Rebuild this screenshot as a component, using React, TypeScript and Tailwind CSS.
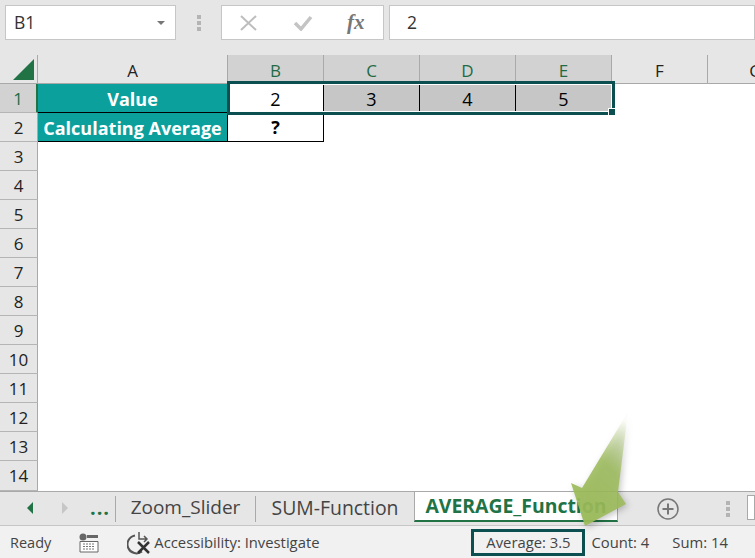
const rows = [3, 4, 5, 6, 7, 8, 9, 10, 11, 12, 13, 14]
const font = "font-['Open_Sans','Noto_Sans',sans-serif]"

function Grip() {
  return (
    <div className="flex flex-col gap-[2px]">
      <span className="h-[4px] w-[4px] bg-[#b4b4b4]" />
      <span className="h-[4px] w-[4px] bg-[#b4b4b4]" />
      <span className="h-[4px] w-[4px] bg-[#b4b4b4]" />
    </div>
  )
}

function FormulaBar() {
  return (
    <div className="flex h-[55px] shrink-0 items-start gap-[5px] bg-[#e6e6e6] pl-[5px] pt-[5px]">
      <div className="flex h-[35px] w-[171px] items-center justify-between border border-[#c6c6c6] bg-white pl-2 pr-[10px] text-[17.5px] text-[#333]">
        B1
        <span className="h-0 w-0 border-x-[4px] border-t-[4px] border-x-transparent border-t-[#777]" />
      </div>
      <div className="flex h-[35px] w-[35px] items-center justify-center">
        <Grip />
      </div>
      <div className="flex h-[35px] w-[163px] items-center border border-[#c6c6c6] bg-white pl-[18px]">
        <svg width="18" height="16" viewBox="0 0 18 16">
          <path d="M1 1 L16 15 M16 1 L1 15" stroke="#bdbdbd" strokeWidth="2" />
        </svg>
        <svg className="ml-[35px]" width="20" height="16" viewBox="0 0 20 16">
          <path d="M2 8 L8 14 L18 2" stroke="#c4c4c4" strokeWidth="3.5" fill="none" />
        </svg>
        <span className="ml-[34px] font-['Liberation_Serif',serif] text-[21px] font-bold italic leading-none text-[#777]">fx</span>
      </div>
      <div className="flex h-[35px] flex-1 items-center border border-[#c6c6c6] bg-white pl-[17px] text-[17.5px] text-[#333]">2</div>
    </div>
  )
}

function ColHead({ label, active }: { label: string; active?: boolean }) {
  return (
    <div
      className={`flex items-center justify-center border-r border-b border-[#a9a9a9] pt-1 text-[17px] ${
        active ? "bg-[#d2d2d2] text-[#1f6b45]" : "bg-[#e6e6e6] text-[#222]"
      }`}
    >
      {label}
    </div>
  )
}

function RowHead({ label, active }: { label: number; active?: boolean }) {
  return (
    <div
      className={`col-start-1 flex items-center justify-center border-b border-[#b5b5b5] pt-px text-[17px] ${
        active ? "border-r-[2px] border-r-[#217346] bg-[#d2d2d2] text-[#1f6b45]" : "border-r border-r-[#a9a9a9] bg-[#e6e6e6] text-[#222]"
      }`}
    >
      {label}
    </div>
  )
}

function Sheet() {
  return (
    <div className="relative h-[436px] shrink-0 overflow-hidden bg-white">
      <div className="grid grid-cols-[38px_190px_96px_96px_96px_96px_96px_96px] grid-rows-[repeat(14,29px)_30px]">
        <div className="relative border-r border-b border-[#a9a9a9] bg-[#e6e6e6]">
          <svg className="absolute left-[13px] top-[4px]" width="22" height="22" viewBox="0 0 22 22">
            <path d="M0 21 L21 21 L21 0 Z" fill="#217346" />
          </svg>
        </div>
        <ColHead label="A" />
        <ColHead label="B" active />
        <ColHead label="C" active />
        <ColHead label="D" active />
        <ColHead label="E" active />
        <ColHead label="F" />
        <ColHead label="G" />

        <RowHead label={1} active />
        <div className="flex items-center justify-center border-r border-b border-black bg-[#0ca09d] pt-[2px] text-[18px] font-bold text-white">Value</div>
        <div className="flex items-center justify-center border-r border-b border-black bg-white pt-[2px] text-[18px] text-black">2</div>
        <div className="flex items-center justify-center border-r border-b border-black bg-[#c6c6c6] pt-[2px] text-[18px] text-black">3</div>
        <div className="flex items-center justify-center border-r border-b border-black bg-[#c6c6c6] pt-[2px] text-[18px] text-black">4</div>
        <div className="flex items-center justify-center border-r border-b border-black bg-[#c6c6c6] pt-[2px] text-[18px] text-black">5</div>

        <RowHead label={2} />
        <div className="flex items-center justify-center whitespace-nowrap border-r border-b border-black bg-[#0ca09d] pt-[2px] text-[18px] font-bold text-white">Calculating Average</div>
        <div className="flex items-center justify-center border-r border-b border-black bg-white text-[18px] font-bold text-black">?</div>

        {rows.map((r) => (
          <RowHead key={r} label={r} />
        ))}
      </div>
      {/* selection outline */}
      <div className="absolute left-[227px] top-[26px] h-[34px] w-[388px] border-[3px] border-[#0b4f51]">
        <div className="h-full w-full border border-white" />
      </div>
      <div className="absolute left-[608px] top-[53px] h-[7px] w-[7px] border-t border-l border-white bg-[#0b4f51]" />
    </div>
  )
}

function Tabs() {
  return (
    <div className="flex h-[34px] shrink-0 items-start border-t border-[#a9a9a9] bg-[#e6e6e6]">
      <span className="ml-[27px] mt-[10px] h-0 w-0 border-y-[6px] border-r-[6px] border-y-transparent border-r-[#217346]" />
      <span className="ml-[29px] mt-[10px] h-0 w-0 border-y-[6px] border-l-[6px] border-y-transparent border-l-[#c6c6c6]" />
      <span className="ml-[19px] mt-[5px] flex h-[22px] w-[26px] items-end justify-center pb-[1px] text-[20px] font-bold leading-none tracking-[1px] text-[#217346]">...</span>
      <div className="ml-[2px] mt-[4px] h-[26px] w-px bg-[#a9a9a9]" />
      <div className="mt-[1px] w-[139px] text-center text-[19px] text-[#444]">Zoom_Slider</div>
      <div className="mt-[4px] h-[26px] w-px bg-[#a9a9a9]" />
      <div className="mt-[1px] w-[158px] text-center text-[19.4px] text-[#444]">SUM-Function</div>
      <div className="flex h-[30px] w-[204px] items-center justify-center border-x border-b-[2px] border-x-[#a9a9a9] border-b-[#217346] bg-white pb-px text-[19.4px] font-bold text-[#217346]">
        AVERAGE_Function
      </div>
      <svg className="ml-[38px] mt-[5px]" width="24" height="24" viewBox="0 0 24 24">
        <circle cx="12" cy="12" r="10" fill="none" stroke="#777" strokeWidth="1.5" />
        <path d="M12 6.5 V17.5 M6.5 12 H17.5" stroke="#777" strokeWidth="2" />
      </svg>
      <div className="ml-[46px] mt-[9px]">
        <Grip />
      </div>
      <div className="ml-[17px] mt-[3px] h-[25px] flex-1 border border-[#a9a9a9] bg-white" />
    </div>
  )
}

function StatusBar() {
  return (
    <div className="flex h-[33px] shrink-0 items-center border-t border-[#c6c6c6] bg-[#f1f1f1] pt-px text-[14.8px] text-[#444]">
      <span className="ml-[10px] text-[14.5px]">Ready</span>
      <svg className="ml-[27px]" width="21" height="20" viewBox="0 0 21 20">
        <circle cx="5" cy="4" r="3.5" fill="#666" />
        <path d="M9 2 H20 V5 H9 Z" fill="#666" />
        <path d="M2 8.5 H20 V19 H2 Z" fill="#fff" stroke="#666" />
        <path d="M5 11 H17 M5 13.5 H17 M5 16 H17" stroke="#777" strokeDasharray="2 1" />
      </svg>
      <svg className="ml-[28px]" width="26" height="24" viewBox="0 0 26 24">
        <path d="M8 4.5 A9 9 0 1 0 15 20.5" fill="none" stroke="#555" strokeWidth="2" />
        <path d="M12 1 V8 H20 M17 5 L20 8 L17 11" fill="none" stroke="#555" strokeWidth="1.5" />
        <path d="M11 11 L22 22 M22 11 L11 22" stroke="#333" strokeWidth="2.5" />
      </svg>
      <span className="ml-[1px]">Accessibility: Investigate</span>
      <div className="ml-[152px] flex h-[27px] w-[114px] items-center justify-center border-[3px] border-[#0b4f51]">Average: 3.5</div>
      <span className="ml-[6px]">Count: 4</span>
      <span className="ml-[23px]">Sum: 14</span>
    </div>
  )
}

export default function App() {
  return (
    <div className={`relative flex h-[558px] w-[755px] flex-col overflow-hidden bg-white ${font}`}>
      <FormulaBar />
      <Sheet />
      <Tabs />
      <StatusBar />
      {/* callout arrow */}
      <svg className="absolute left-[560px] top-[410px] drop-shadow-[2px_2px_3px_rgba(0,0,0,0.25)]" width="80" height="125" viewBox="0 0 80 125">
        <defs>
          <linearGradient id="arrowFill" x1="0.8" y1="0" x2="0.35" y2="1">
            <stop offset="0" stopColor="#9bbb59" stopOpacity="0.03" />
            <stop offset="0.45" stopColor="#9bbb59" stopOpacity="0.85" />
            <stop offset="1" stopColor="#9bbb59" stopOpacity="0.95" />
          </linearGradient>
        </defs>
        <path d="M68 2 L58 82 L66 94 L25 116 L11 73 L22 78 Z" fill="url(#arrowFill)" />
      </svg>
    </div>
  )
}
